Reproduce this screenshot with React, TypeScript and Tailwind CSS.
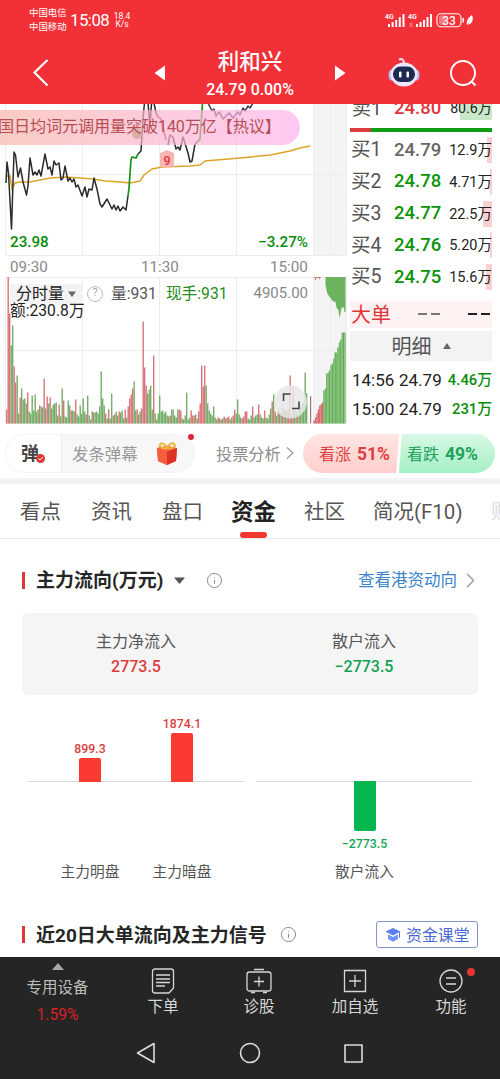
import type { ReactNode } from 'react'
import { ChevronRight, Info } from 'lucide-react'

const bids = [
  { label: '买1', price: '24.79', volume: '12.9万', color: 'text-[#666]', bar: 'w-[5px]' },
  { label: '买2', price: '24.78', volume: '4.71万', color: 'text-[#099409]', bar: 'w-[2px]' },
  { label: '买3', price: '24.77', volume: '22.5万', color: 'text-[#099409]', bar: 'w-[9px]' },
  { label: '买4', price: '24.76', volume: '5.20万', color: 'text-[#099409]', bar: 'w-[2px]' },
  { label: '买5', price: '24.75', volume: '15.6万', color: 'text-[#099409]', bar: 'w-[6px]' },
]

const trades = [
  { time: '14:56', price: '24.79', volume: '4.46万' },
  { time: '15:00', price: '24.79', volume: '231万' },
]

// bar heights in px, negative values are drawn red
const volumes = [
  -14, -147, -110, 78, 98, -57, -41, 48, 10, -26, 35, 24, 25, 20, -31, 12, 10, 28, 13, 29,
  12, 14, -18, 17, 16, -45, 15, -27, 20, -26, 15, 19, 20, 21, 8, -19, 7, 35, -23, 7,
  6, 23, 18, -13, 13, 12, -24, 9, 7, 18, 10, 25, 12, -9, 28, 8, 4, -12, 11, 11,
  12, 10, 17, 52, 25, 18, -10, 5, -14, 5, 30, 8, -9, 12, 8, -12, 11, 13, 5, -14,
  6, -17, -25, -29, -35, 42, 13, -14, 9, 12, -15, -102, -56, -38, 30, 34, 38, 14, -68, 10,
  4, 10, 28, 12, 13, 10, 12, 8, 7, -8, 14, 14, 8, 6, 14, -14, -13, 5, 4, 8,
  31, 4, 6, -13, -8, -8, 9, 5, -12, -20, -58, -37, -58, 38, 20, 13, 10, 8, 17, 6,
  4, -6, -5, 4, 5, -7, 5, -6, -7, 4, 6, -8, -14, 10, 24, 9, 6, -5, -7, -12,
  -12, 5, 4, 8, -17, 6, 8, 9, -19, 9, 6, 5, -13, 6, 5, 9, 15, -22, 29, -12,
  8, 14, -12, 10, -16, 13, -14, 12, -14, -48, 8, -37, 14, 12, -9, 14, 17, 20, 20, 51, 30,
]

const auction = [-3, -6, -10, -14, -18, -19, -21, 33, 35, 50, 51, 53, 58, 60, 65, 71, 71, 76, 81, 84, 91, 91, 91]

function StatusBar() {
  return (
    <div className="flex h-10 items-center">
      <div className="ml-[29px] flex w-[38px] flex-col text-[9.4px] leading-[14px]">
        <span>中国电信</span>
        <span>中国移动</span>
      </div>
      <span className="ml-[3px] w-[40px] pt-[2px] text-[16.8px] tracking-[-0.5px]">15:08</span>
      <div className="ml-[2px] flex w-5 flex-col items-center text-[8.5px] leading-[8px]">
        <span>18.4</span>
        <span>K/s</span>
      </div>
      <svg className="ml-[252px]" width="92" height="18" viewBox="384 11 92 18" fill="#fff">
        <text x="385" y="19" fontSize="7" fontWeight="600">4G</text>
        <text x="408" y="19" fontSize="7" fontWeight="600">4G</text>
        <path d="M388 24h2v3h-2zM391.6 22h2v5h-2zM395.2 20h2v7h-2zM398.8 17h2v10h-2zM402.5 14h2v13h-2z" />
        <path d="M416 24h2v3h-2zM419.5 22h2v5h-2zM423 20h2v7h-2zM426.5 17h2v10h-2zM430 14h2v13h-2z" />
        <path d="M409.5 23h3v4h-3z" fillOpacity="0.3" />
        <rect x="437" y="13.7" width="24" height="13" rx="4" fill="none" stroke="#fff" strokeWidth="1.1" />
        <path d="M441 15.5h5v9.5h-5a2 2 0 0 1-2-2v-5.5a2 2 0 0 1 2-2z" fillOpacity="0.35" />
        <rect x="462.5" y="18" width="1.5" height="4.5" />
        <text x="449" y="24.5" fontSize="12" fontWeight="500" textAnchor="middle">33</text>
        <path d="M467 25c-1-5 2-8 5-10 2 5 0 9-4 9.5l3-6-4 7z" />
      </svg>
    </div>
  )
}

function Robot() {
  return (
    <svg width="32" height="32" viewBox="0 0 32 32">
      <path d="M11 2.5c3-1.5 5 0 5 4" fill="none" stroke="#dfe2ff" strokeWidth="2" />
      <ellipse cx="3.5" cy="18" rx="3" ry="5.5" fill="#b9b8f3" />
      <ellipse cx="28.5" cy="18" rx="3" ry="5.5" fill="#b9b8f3" />
      <ellipse cx="16" cy="17.5" rx="13.5" ry="12" fill="#e9e8ff" />
      <rect x="5" y="9.5" width="22" height="15.5" rx="7.5" fill="#1d2b52" />
      <rect x="11" y="14.5" width="2.5" height="6" rx="1" fill="#fff" />
      <rect x="18.5" y="14.5" width="2.5" height="6" rx="1" fill="#fff" />
    </svg>
  )
}

function Header() {
  return (
    <header className="h-[104px] shrink-0 bg-[#f23038] text-white">
      <StatusBar />
      <div className="flex h-16 items-center pt-[2px]">
        <svg className="ml-8" width="20" height="30" viewBox="0 0 20 30" fill="none" stroke="#fff" strokeWidth="2.2">
          <path d="M15.5 2 2.5 14.5l13 13" />
        </svg>
        <svg className="ml-[102px]" width="12" height="16" viewBox="0 0 12 16" fill="#fff">
          <path d="M11 .5v15L.5 8z" />
        </svg>
        <div className="mx-[20px] w-[128px] pt-[2px] text-center">
          <h1 className="text-[21.5px] leading-[30px] font-medium whitespace-nowrap">利和兴</h1>
          <p className="mt-[2px] text-[15.9px] leading-[22px] font-medium whitespace-nowrap">24.79 0.00%</p>
        </div>
        <svg width="12" height="16" viewBox="0 0 12 16" fill="#fff">
          <path d="M1 .5v15L11.5 8z" />
        </svg>
        <span className="ml-[42px]">
          <Robot />
        </span>
        <svg className="ml-[29px]" width="28" height="30" viewBox="0 0 28 30" fill="none" stroke="#fff" strokeWidth="1.9">
          <circle cx="14" cy="15" r="12" />
          <path d="m22 23 4.5 4.5" />
        </svg>
      </div>
    </header>
  )
}

function PriceChart() {
  return (
    <div className="relative h-[152px] overflow-hidden">
      <svg width="348" height="152" viewBox="0 104 348 152" fill="none">
        <rect x="313" y="104" width="33" height="152" fill="#f4f4f4" />
        <path
          d="M5.5 104v151.5H346.5V104M82.5 104v152M159.5 104v152M236.5 104v152M313.5 104v152M330.5 104v152M5 174.5h341"
          stroke="#ededed"
        />
        <path
          d="M7 176 10 176 12 189 15 183 20 182 30 182 50 178 65 177 80 178 93 179 105 181 120 182 130 183 140 181 144 175 152 169 162 167 190 166 200 165 205 161 240 158 270 155 290 151 300 148 310 146"
          stroke="#dca52a"
          strokeWidth="1.5"
        />
        <g strokeWidth="1.5" strokeLinejoin="round" stroke="#2b2b2b">
          <path d="M6 183 7 162 8.5 173 11.5 229 14 152 15.5 155 18 177 20.5 168 23 182 26.5 195 28 186 30 158 33 175 35 172 37 175 39 170 41 176 45 154 48 169 50 167 52 175 54 161 56 165 59 163 61 180 63 178 65 166 68 181 70 178 72 182 74 179 76 187 78 185 82 196 85 187 87 197 89 189 92 190 94 178 97 189 100 204 102 207 107 199 112 209 114 205 116 210 118 206 120 211 123 207 126 210 128 196" />
          <path d="M138 154 141 151 143 118 144.5 103M148 103 150 126 151.5 103M154 103 156 113 158 117M168 145 170 135 173 137 176 149 178 147 180 150 183 137 188 153 190 162 192 161 195 144" />
          <path d="M208 103 212 111 214 109 216 116 219 112 220 113 223 119 229 113 233 118 238 112 240 115 243 108 245 111 248 106 250 108 253 103" stroke="#453a4c" />
        </g>
        <path d="M128 196 129 188 131 160 132 157 136 158 138 154M195 144 200 139 202.5 103" stroke="#159415" strokeWidth="1.7" />
        <path d="m158 117 3 2 5 21" stroke="#e33243" strokeWidth="1.7" />
        <circle cx="137" cy="134" r="5" fill="#8e9b61" />
        <path d="m160 153 7-3 7 3v14h-14z" fill="#f7b6b2" />
        <text x="167" y="164.5" fontSize="12.5" fontWeight="500" fill="#e43439" textAnchor="middle">9</text>
      </svg>
      <div className="absolute top-[6px] left-0 flex h-[35px] w-[300px] items-center rounded-r-full bg-gradient-to-r from-[#f8b5a8b0] to-[#ffb2ecb0] text-[16.1px] whitespace-nowrap text-[#b54e55]">
        <span className="-ml-[2px] tracking-[-0.1px]">国日均词元调用量突破140万亿【热议】</span>
      </div>
      <div className="absolute bottom-[4px] left-[10px] flex w-[298px] justify-between text-[15.2px] leading-5 font-medium text-[#098c09]">
        <span>23.98</span>
        <span>−3.27%</span>
      </div>
    </div>
  )
}

function VolumeChart() {
  return (
    <div className="relative h-[147px]">
      <svg width="348" height="147" viewBox="0 277 348 147">
        <rect x="313" y="277" width="33" height="147" fill="#f4f4f4" />
        <path
          d="M5.5 423.5V277.5H346.5V423.5zM82.5 277v147M159.5 277v147M236.5 277v147M313.5 277v147M330.5 277v147M5 350.5h341"
          fill="none"
          stroke="#ededed"
        />
        {volumes.map((v, i) => (
          <rect
            key={i}
            x={6 + i * 1.5}
            y={423.5 - Math.abs(v)}
            width="1.4"
            height={Math.abs(v)}
            fill={v < 0 ? '#d8747a' : '#74ae68'}
          />
        ))}
        <rect x="310" y="396" width="1.2" height="27" fill="#9c7276" />
        {auction.map((v, i) => (
          <rect
            key={i}
            x={313.5 + i * 1.4}
            y={423.5 - Math.abs(v)}
            width="1.4"
            height={Math.abs(v)}
            fill={v < 0 ? '#d8686d' : i % 2 ? '#5faa52' : '#78ba6c'}
          />
        ))}
        <path d="M325.5 277v8l2 9 3 4 2 3 3 1 1 6 2 2 1 8 1-4 1-6 2-1 1 5h1V277z" fill="#6cb35f" />
        <path d="M314 277.5h7M315.5 277v3M319.5 277v2" stroke="#b98a76" />
        <circle cx="290.5" cy="402" r="16.5" fill="#e7e7e7" fillOpacity="0.85" />
        <path d="M283.5 401v-7h7M292 408.5h7v-7" fill="none" stroke="#444" strokeWidth="1.6" />
      </svg>
      <div className="absolute top-[5px] left-[10px] flex h-[23px] w-[298px] items-center text-[15.3px] whitespace-nowrap">
        <span className="flex h-5 w-[73px] items-center gap-1 bg-[#f3f3f3] pl-[6px] text-[16px] text-[#222]">
          分时量
          <svg width="8" height="6" viewBox="0 0 8 6" fill="#666">
            <path d="M0 .5h8L4 6z" />
          </svg>
        </span>
        <span className="ml-1 flex size-4 items-center justify-center rounded-full border border-[#bbb] text-[11px] text-[#aaa]">
          ?
        </span>
        <span className="ml-2 pt-px text-[15.7px] text-[#555]">量:931</span>
        <span className="ml-[9px] pt-px text-[15.7px] text-[#258c1c]">现手:931</span>
        <span className="ml-auto text-[15px] text-[#888]">4905.00</span>
      </div>
      <span className="absolute top-[24px] left-[10px] text-[15.7px] leading-5 text-[#222]">额:230.8万</span>
    </div>
  )
}

function OrderBook() {
  return (
    <aside className="flex w-[152px] flex-col pr-[8px] pl-[2px] text-[#222]">
      <div className="relative h-[23px] shrink-0 overflow-hidden">
        <span className="absolute top-0 right-0 h-4 w-8 bg-[#c9e8c9]" />
        <div className="relative -mt-[11px] flex h-8 items-center pl-[2px] whitespace-nowrap">
          <span className="w-[42px] text-[19px] text-[#555]">卖1</span>
          <span className="text-[18.5px] font-medium text-[#e0343b]">24.80</span>
          <span className="ml-auto text-[14.2px]">80.6万</span>
        </div>
      </div>
      <div className="mt-[1px] flex h-1 shrink-0">
        <span className="w-[21px] bg-[#dc3b3e]" />
        <span className="flex-1 bg-[#109c14]" />
      </div>
      <div className="mt-[2px] flex shrink-0 flex-col">
        {bids.map((b) => (
          <div key={b.label} className="relative flex h-[31.75px] items-center pl-[1px] whitespace-nowrap">
            <span className={`absolute top-[3px] right-0 h-[26px] bg-[#fbd0d3] ${b.bar}`} />
            <span className="relative w-[43px] text-[19.5px] text-[#555]">{b.label}</span>
            <span className={`relative pt-px text-[18.5px] font-medium ${b.color}`}>{b.price}</span>
            <span className="relative ml-auto pt-[2px] text-[14.5px]">{b.volume}</span>
          </div>
        ))}
      </div>
      <div className="mt-[8px] flex h-[27px] shrink-0 items-center bg-[#fdf1f1] pl-[1px]">
        <span className="pt-[2px] text-[20px] leading-[27px] text-[#df363b]">大单</span>
        <span className="ml-[27px] flex gap-1">
          <i className="h-[2px] w-[9px] bg-[#777]" />
          <i className="h-[2px] w-[9px] bg-[#777]" />
        </span>
        <span className="ml-auto flex gap-1 pr-[2px]">
          <i className="h-[2px] w-[9px] bg-[#222]" />
          <i className="h-[2px] w-[9px] bg-[#222]" />
        </span>
      </div>
      <div className="mt-[3px] flex h-[30px] shrink-0 items-center justify-center gap-[11px] bg-[#f3f3f3] text-[20px] text-[#555]">
        <span className="pt-[2px]">明细</span>
        <svg width="8" height="6" viewBox="0 0 8 6" fill="#666">
          <path d="M0 6h8L4 0z" />
        </svg>
      </div>
      <div className="mt-[5px] flex shrink-0 flex-col">
        {trades.map((t) => (
          <div key={t.time} className="flex h-[29px] items-center pl-[2px] text-[17px] whitespace-nowrap">
            <span className="w-[47px]">{t.time}</span>
            <span>{t.price}</span>
            <span className="ml-auto text-[14.8px] font-medium text-[#098c09]">{t.volume}</span>
          </div>
        ))}
      </div>
    </aside>
  )
}

function Gift() {
  return (
    <svg width="24" height="24" viewBox="0 0 24 24">
      <path d="m2 6 10-2 10 2-1 13-9 4-9-4z" fill="#ef4934" />
      <path d="m2 6 10 3v14l-9-4z" fill="#f65d3d" />
      <path d="m12 9 10-3-1 13-9 4z" fill="#da3427" />
      <path d="m2 6 10-2 10 2-10 3.5z" fill="#ff6b4b" />
      <path d="M12 6C8 7 4 5 5 2.5S11 2 12 6c1-4 6-6 7.5-3.5S16 7 12 6z" fill="none" stroke="#efb23e" strokeWidth="2" />
    </svg>
  )
}

function CommentBar() {
  return (
    <div className="flex h-[54px] shrink-0 items-center pt-[10px] pr-[5px] pb-[5px] pl-[5px]">
      <div className="relative flex h-[39px] w-[190px] rounded-full border border-[#f4f4f4]">
        <div className="relative flex w-[55px] items-center pl-[15px] text-[18px] font-bold text-[#444]">
          弹
          <svg className="absolute right-[16px] bottom-[9px]" width="9" height="9" viewBox="0 0 9 9">
            <circle cx="4.5" cy="4.5" r="4.5" fill="#df3a34" />
            <path d="m2.5 4.5 1.5 1.5 2.8-3" stroke="#fff" fill="none" />
          </svg>
        </div>
        <div className="flex flex-1 items-center rounded-r-full border-l border-[#eee] bg-[#f7f7f7] pl-[10px] text-[16.4px] whitespace-nowrap text-[#999]">
          <span className="pt-[3px]">发条弹幕</span>
          <span className="ml-[17px]">
            <Gift />
          </span>
        </div>
        <span className="absolute -top-[1px] right-0 size-[6px] rounded-full bg-[#dc2438]" />
      </div>
      <span className="ml-[21px] flex items-center text-[16.2px] whitespace-nowrap text-[#8d8d8d]">
        <span className="pt-[3px]">投票分析</span>
        <svg className="ml-[5px]" width="8" height="12" viewBox="0 0 8 12" fill="none" stroke="#999" strokeWidth="1.2">
          <path d="m1 .5 6 5.5-6 5.5" />
        </svg>
      </span>
      <div className="ml-auto flex h-[39px] w-[192px] text-[16px] whitespace-nowrap">
        <div className="flex w-[96px] items-center rounded-l-full bg-gradient-to-b from-[#ffe5e3] to-[#ffcfcc] pt-[2px] pl-[16px] text-[#df3e3e] [clip-path:polygon(0_0,100%_0,97%_100%,0_100%)]">
          看涨<b className="ml-[6px] text-[17.5px]">51%</b>
        </div>
        <div className="flex w-[96px] items-center rounded-r-full bg-gradient-to-b from-[#d8f8e5] to-[#a4efc5] pt-[2px] pl-[8px] text-[#20a25b] [clip-path:polygon(3%_0,100%_0,100%_100%,0_100%)]">
          看跌<b className="ml-[6px] text-[17.5px]">49%</b>
        </div>
      </div>
    </div>
  )
}

function Tabs() {
  return (
    <nav className="flex h-[61px] shrink-0 items-center overflow-hidden border-t-[6px] border-b border-t-[#f3f3f4] border-b-[#e5e5e5] pl-5 text-[20.5px] whitespace-nowrap text-[#555]">
      <span className="w-[71px] shrink-0 pt-[3px]">看点</span>
      <span className="w-[71px] shrink-0 pt-[3px]">资讯</span>
      <span className="w-[69px] shrink-0 pt-[3px]">盘口</span>
      <span className="relative flex h-full w-[73px] shrink-0 items-center pt-[3px] text-[22.5px] font-bold text-[#222]">
        资金
        <i className="absolute bottom-0 left-[9px] h-[6px] w-[27px] rounded-full bg-[#f13732]" />
      </span>
      <span className="w-[69px] shrink-0 pt-[3px]">社区</span>
      <span className="w-[118px] shrink-0 pt-[3px]">简况(F10)</span>
      <span className="shrink-0 pt-[3px] text-[#ddd]">财</span>
    </nav>
  )
}

function SectionTitle({ children }: { children: ReactNode }) {
  return (
    <h2 className="flex items-center text-[19px] font-bold whitespace-nowrap text-[#262626]">
      <span className="mr-[11px] h-[17px] w-[3px] bg-[#df3936]" />
      <span className="-mb-[3px]">{children}</span>
    </h2>
  )
}

function FundFlow() {
  return (
    <section className="shrink-0 px-[22px]">
      <div className="flex h-[74px] items-center pt-2">
        <SectionTitle>主力流向(万元)</SectionTitle>
        <svg className="ml-[11px]" width="11" height="7" viewBox="0 0 11 7" fill="#555">
          <path d="M0 .5h11L5.5 7z" />
        </svg>
        <Info className="ml-[21px]" size={17} strokeWidth={1.4} color="#888" />
        <a className="-mr-[5px] ml-auto flex items-center text-[16.5px] whitespace-nowrap text-[#3c83cb]">
          <span className="pt-[3px]">查看港资动向</span>
          <ChevronRight className="ml-[1px]" size={25} strokeWidth={1.2} color="#999" />
        </a>
      </div>
      <div className="grid h-[82px] grid-cols-2 rounded-md bg-[#f5f5f5] pt-[17px] text-center">
        <div>
          <p className="text-[16px] leading-6 text-[#555]">主力净流入</p>
          <p className="text-[16px] leading-[25px] font-medium text-[#df3c3c]">2773.5</p>
        </div>
        <div>
          <p className="text-[16px] leading-6 text-[#555]">散户流入</p>
          <p className="text-[16px] leading-[25px] font-medium text-[#11a353]">−2773.5</p>
        </div>
      </div>
      <div className="flex gap-[11px] pt-[19px] pr-[5px] pl-[5px] text-[12.3px] leading-4 font-medium">
        <div className="w-[218px]">
          <div className="flex h-[68px] items-end border-b border-[#ddd] pl-[17px]">
            <FlowBar value="899.3" bar="h-6" />
            <FlowBar value="1874.1" bar="h-[49px]" />
          </div>
          <div className="flex pt-[78px] pl-[17px] text-center text-[14.7px] leading-6 font-normal text-[#555]">
            <span className="w-[92px]">主力明盘</span>
            <span className="w-[92px]">主力暗盘</span>
          </div>
        </div>
        <div className="flex w-[217px] flex-col items-center pt-[67px]">
          <div className="h-px w-full bg-[#ddd]" />
          <div className="-mt-px h-[50px] w-[22px] rounded-b-[2px] bg-[#06b650]" />
          <span className="mt-[5px] text-[#11a353]">−2773.5</span>
          <span className="mt-[8px] text-[14.7px] leading-6 font-normal text-[#555]">散户流入</span>
        </div>
      </div>
    </section>
  )
}

function FlowBar({ value, bar }: { value: string; bar: string }) {
  return (
    <div className="-mb-px flex w-[92px] flex-col items-center text-[#d93e3c]">
      <span className="mb-px">{value}</span>
      <span className={`w-[22px] rounded-t-[2px] bg-[#fb3b31] ${bar}`} />
    </div>
  )
}

function SignalHeader() {
  return (
    <section className="flex h-[73px] shrink-0 items-center px-[22px] pt-[28px]">
      <SectionTitle>近20日大单流向及主力信号</SectionTitle>
      <Info className="ml-[13px]" size={17} strokeWidth={1.4} color="#888" />
      <a className="ml-auto flex h-[27px] w-[102px] items-center rounded-[3px] border border-[#8295ce] pl-2 text-[15.9px] whitespace-nowrap text-[#4a6cd2]">
        <svg className="mr-[5px]" width="16" height="15" viewBox="0 0 16 15">
          <path d="M.5 4.5 8 1l7.5 3.5L8 8.5z" fill="#5b80ed" />
          <path d="M3 7.3 8 10l5-2.7V12l-5 2.8L3 12z" fill="#6e95fb" />
          <path d="M14.5 5v6" stroke="#5b80ed" />
        </svg>
        <span className="pt-[2px]">资金课堂</span>
      </a>
    </section>
  )
}

function NavItem({ label, children }: { label: string; children: ReactNode }) {
  return (
    <div className="flex w-24 flex-col items-center pt-[10px]">
      <svg width="28" height="28" viewBox="0 0 28 28" fill="none" stroke="#d5d5d5" strokeWidth="1.3">
        {children}
      </svg>
      <span className="mt-[2px] text-[15.5px] leading-5 text-[#d8d8d8]">{label}</span>
    </div>
  )
}

function BottomBar() {
  return (
    <footer className="h-[122px] shrink-0 bg-[#252525]">
      <div className="flex h-[70px]">
        <div className="flex w-[115px] flex-col items-center pt-[6px]">
          <svg width="12" height="7" viewBox="0 0 12 7" fill="#aaa">
            <path d="M0 7h12L6 0z" />
          </svg>
          <span className="mt-[7px] text-[15.5px] leading-[22px] text-[#bdbdbd]">专用设备</span>
          <span className="mt-[5px] text-[15.7px] leading-[22px] text-[#dc1f24]">1.59%</span>
        </div>
        <NavItem label="下单">
          <path d="M6 2h16q2.5 0 2.5 2.5V21L20 26H6q-2.5 0-2.5-2.5v-19Q3.5 2 6 2zM7 8h14M7 12h14M7 15.5h14M7 19h9" />
        </NavItem>
        <NavItem label="诊股">
          <rect x="2" y="5" width="24" height="19" rx="2.5" />
          <path d="M9 2.5h10M14 9.5v10M9 14.5h10M6 25.5h4M18 25.5h4" />
        </NavItem>
        <NavItem label="加自选">
          <path d="M3.5 3.5h21v21h-21zM14 8v12M8 14h12" />
        </NavItem>
        <div className="relative">
          <NavItem label="功能">
            <circle cx="14" cy="14" r="11" />
            <path d="M9 11h10M9 17h10" />
          </NavItem>
          <i className="absolute top-[11px] right-[24px] size-2 rounded-full bg-[#e83434]" />
        </div>
      </div>
      <div className="flex h-[52px] items-center pl-[135px]">
        <svg width="230" height="24" viewBox="135 1041 230 24" fill="none" stroke="#ddd" strokeWidth="1.6" strokeLinejoin="round">
          <path d="M154 1043.5v19L137.5 1053z" />
          <circle cx="250" cy="1053" r="9.5" />
          <path d="M345 1045h17v17h-17z" />
        </svg>
      </div>
    </footer>
  )
}

export default function App() {
  return (
    <div className="flex h-[1079px] w-[500px] flex-col overflow-hidden bg-white font-[Roboto,'Noto_Sans_CJK_SC',sans-serif]">
      <Header />
      <div className="flex h-[320px] shrink-0">
        <div className="w-[348px]">
          <PriceChart />
          <div className="flex h-[21px] items-center pt-[2px] pl-[10px] text-[15.2px] text-[#888]">
            <span className="w-[131px]">09:30</span>
            <span className="w-[129px]">11:30</span>
            <span>15:00</span>
          </div>
          <VolumeChart />
        </div>
        <OrderBook />
      </div>
      <CommentBar />
      <Tabs />
      <FundFlow />
      <SignalHeader />
      <BottomBar />
    </div>
  )
}
